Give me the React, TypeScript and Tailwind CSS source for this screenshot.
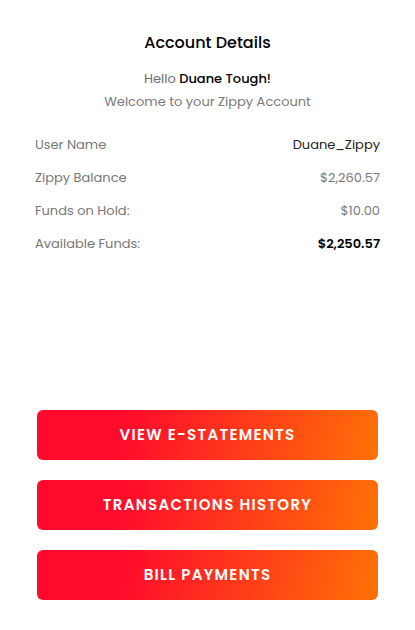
export default function App() {
  const rows = [
    { label: 'User Name', value: 'Duane_Zippy', cls: 'text-[#222222]' },
    { label: 'Zippy Balance', value: '$2,260.57', cls: 'text-[#7a7a7a]' },
    { label: 'Funds on Hold:', value: '$10.00', cls: 'text-[#7a7a7a]' },
    { label: 'Available Funds:', value: '$2,250.57', cls: 'text-black font-semibold' },
  ];
  const buttons = ['VIEW E-STATEMENTS', 'TRANSACTIONS HISTORY', 'BILL PAYMENTS'];

  return (
    <div
      className="w-full min-h-[630px] bg-white flex flex-col pt-[31px] pb-[30px]"
      style={{ fontFamily: 'Poppins, Inter, "Open Sans", sans-serif' }}
    >
      <h1 className="text-center text-[16px] leading-[24px] font-medium text-black">Account Details</h1>
      <p className="mt-[12px] text-center text-[13px] leading-[23px] text-[#6e6e6e]">
        Hello <span className="font-medium text-black">Duane Tough!</span>
      </p>
      <p className="text-center text-[13px] leading-[23px] text-[#7a7a7a]">Welcome to your Zippy Account</p>

      <div className="mt-[15px] px-[35px] flex flex-col">
        {rows.map((r) => (
          <div key={r.label} className="flex justify-between items-center h-[33px] text-[13px]">
            <span className="text-[#777777]">{r.label}</span>
            <span className={r.cls}>{r.value}</span>
          </div>
        ))}
      </div>

      <div className="mt-[150px] px-[37px] flex flex-col gap-5">
        {buttons.map((b) => (
          <button
            key={b}
            className="h-[50px] w-full rounded-[6px] bg-linear-[105deg] from-[#ff0a2c] from-25% to-[#ff7206] text-white text-[15px] font-semibold tracking-[1.3px]"
          >
            {b}
          </button>
        ))}
      </div>
    </div>
  );
}
